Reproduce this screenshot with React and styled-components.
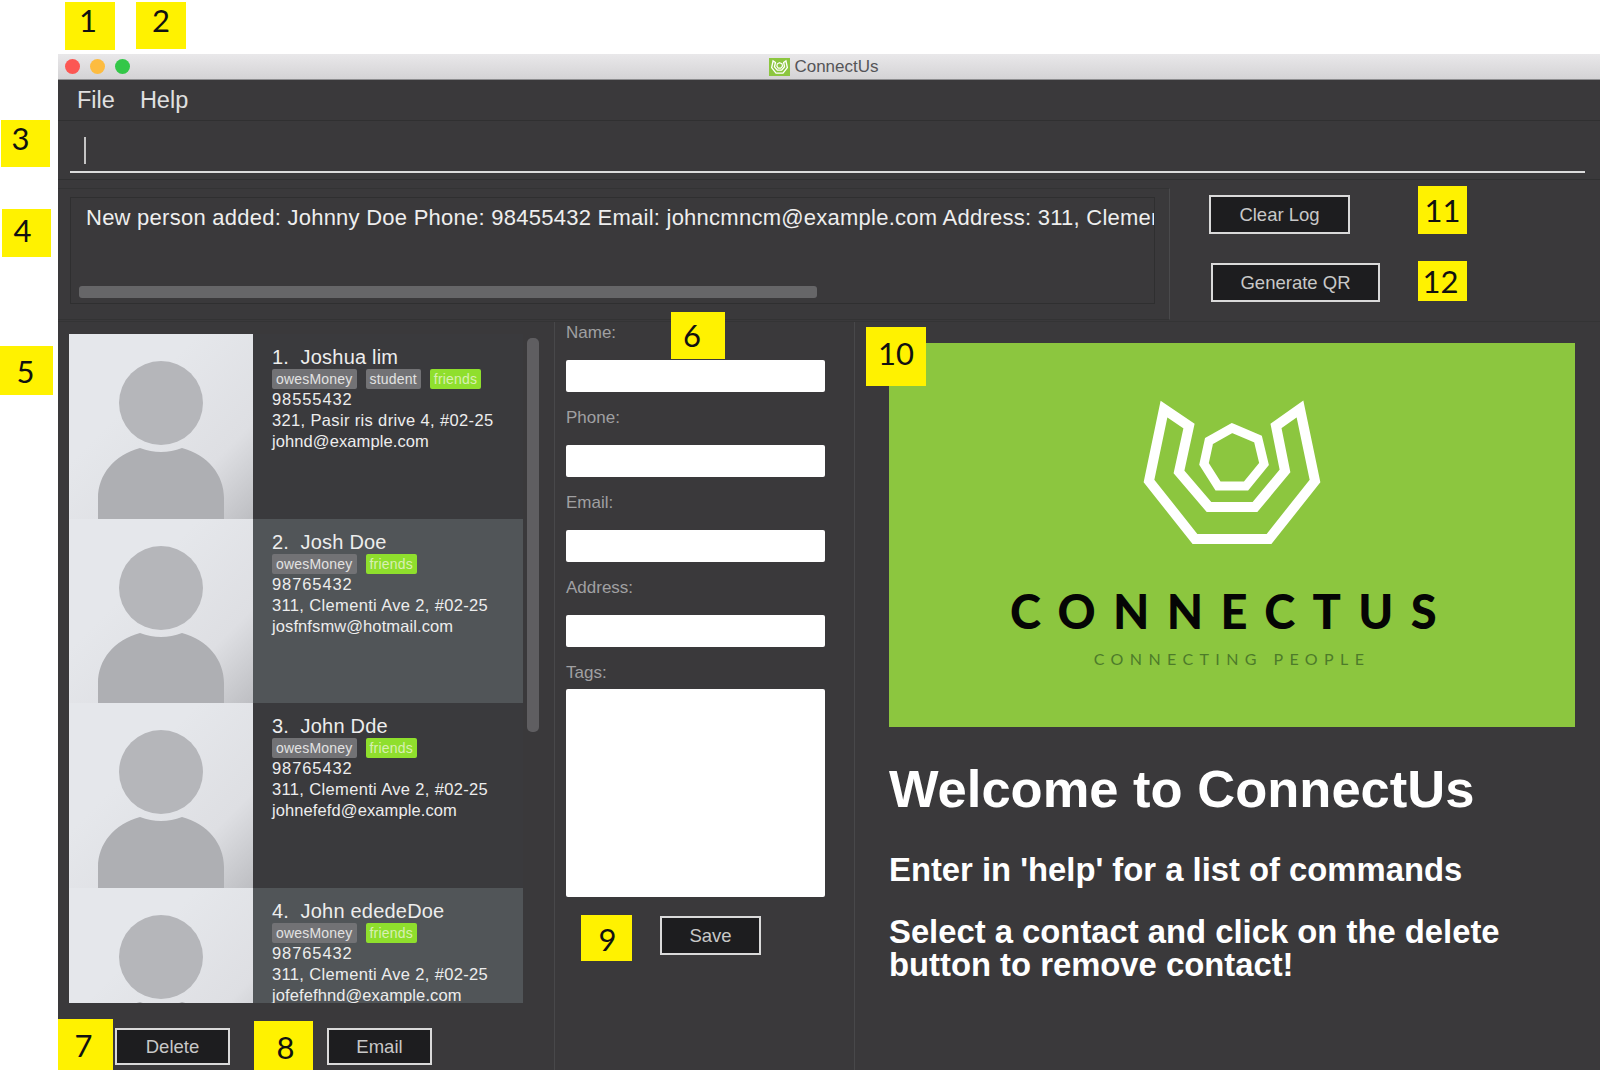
import React from 'react';
import styled, { createGlobalStyle } from 'styled-components';

const GlobalStyle = createGlobalStyle`
  html, body {
    margin: 0;
    background: #ffffff;
  }
  * {
    box-sizing: border-box;
  }
`;

const Page = styled.div`
  position: relative;
  width: 1600px;
  height: 1078px;
  padding: 54px 0 8px 58px;
  overflow: hidden;
  font-family: 'Liberation Sans', Arial, sans-serif;
`;

const Callout = styled.div`
  position: absolute;
  left: ${(p) => p.$x}px;
  top: ${(p) => p.$y}px;
  width: ${(p) => p.$w}px;
  height: ${(p) => p.$h}px;
  display: flex;
  align-items: center;
  justify-content: center;
  background: #fff200;
  color: #111111;
  font-family: Lato, sans-serif;
  font-size: 31px;
`;

const CalloutDigit = styled.span`
  transform: translate(${(p) => p.$dx}px, ${(p) => p.$dy}px);
`;

const Window = styled.div`
  display: flex;
  flex-direction: column;
  height: 100%;
  background: #3a393b;
`;

const TitleBar = styled.div`
  position: relative;
  display: flex;
  align-items: center;
  justify-content: center;
  height: 26px;
  padding-right: 10px;
  background: linear-gradient(#e9e8ea, #d4d3d5);
  border-bottom: 1px solid #8e8e90;
`;

const Lights = styled.div`
  position: absolute;
  left: 7px;
  top: 5px;
  display: flex;
  gap: 10px;
`;

const Light = styled.span`
  width: 15px;
  height: 15px;
  border-radius: 50%;
  background: ${(p) => p.$color};
`;

const TitleText = styled.span`
  margin-left: 4px;
  font-size: 17px;
  color: #555558;
`;

const MenuBar = styled.div`
  display: flex;
  align-items: center;
  gap: 25px;
  height: 41px;
  padding: 1px 0 0 19px;
  border-bottom: 1px solid #303031;
  color: #e0e0e0;
  font-size: 23.5px;
`;

const CommandBar = styled.div`
  height: 59px;
  padding: 16px 15px 0 12px;
  border-bottom: 1px solid #303031;
`;

const CommandField = styled.div`
  height: 36px;
  padding-left: 14px;
  border-bottom: 2px solid #dcdcdc;
`;

const Caret = styled.div`
  width: 2px;
  height: 27px;
  background: #c4c4c4;
`;

const LogRow = styled.div`
  display: flex;
  height: 142px;
  border-bottom: 1px solid #343435;
`;

const LogPane = styled.div`
  width: 1112px;
  height: 132px;
  margin-top: 8px;
  padding: 8px 14px 8px 12px;
  border-top: 1px solid #333334;
  border-right: 1px solid #4a4a4c;
  border-bottom: 1px solid #333334;
`;

const LogBox = styled.div`
  height: 107px;
  padding: 7px 0 0 15px;
  border: 1px solid #2f2f30;
  display: flex;
  flex-direction: column;
  overflow: hidden;
`;

const LogText = styled.div`
  flex: 1;
  overflow: hidden;
  white-space: nowrap;
  color: #eeeeee;
  font-size: 22px;
  letter-spacing: 0.25px;
`;

const LogScroll = styled.div`
  width: 738px;
  height: 12px;
  margin: 0 0 5px -7px;
  border-radius: 3px;
  background: #666668;
`;

const LogActions = styled.div`
  display: flex;
  flex-direction: column;
  align-items: flex-start;
  gap: 29px;
  padding: 15px 0 0 39px;
`;

const ActionButton = styled.button`
  width: ${(p) => p.$w}px;
  height: ${(p) => p.$h || 39}px;
  margin-left: ${(p) => p.$ml || 0}px;
  padding: 0;
  background: #1d1d1f;
  border: 2px solid #dadada;
  color: #c8c8c8;
  font-family: inherit;
  font-size: 18.5px;
`;

const MainRow = styled.div`
  flex: 1;
  display: flex;
  min-height: 0;
`;

const ListColumn = styled.div`
  display: flex;
  flex-direction: column;
  width: 496px;
  padding: 12px 0 0 11px;
`;

const ListArea = styled.div`
  display: flex;
  gap: 4px;
  height: 669px;
`;

const List = styled.div`
  width: 454px;
  overflow: hidden;
`;

const ListScroll = styled.div`
  width: 12px;
  height: 394px;
  margin-top: 4px;
  border-radius: 5px;
  background: #5f5e61;
`;

const Card = styled.div`
  display: flex;
  height: 184.67px;
  background: ${(p) => (p.$even ? '#515558' : '#3a3a3d')};
`;

const Photo = styled.svg`
  flex: none;
  display: block;
  width: 184px;
  height: 185px;
`;

const CardBody = styled.div`
  padding: 12px 0 0 19px;
  color: #ededed;
`;

const CardName = styled.div`
  height: 23px;
  font-size: 20px;
  line-height: 22px;
  letter-spacing: 0.2px;
`;

const Tags = styled.div`
  display: flex;
  gap: 9px;
  height: 20px;
`;

const Tag = styled.span`
  padding: 0 4px;
  border-radius: 2px;
  background: ${(p) => (p.$green ? '#8fdf2d' : '#727275')};
  color: ${(p) => (p.$green ? '#d9f0b4' : '#e2e2e2')};
  font-size: 14px;
  line-height: 20px;
  letter-spacing: 0.2px;
`;

const Detail = styled.div`
  height: 21px;
  font-size: 16.5px;
  line-height: 21px;
  letter-spacing: ${(p) => p.$spacing ?? 0.35}px;
`;

const ListActions = styled.div`
  display: flex;
  gap: 97px;
  padding: 25px 0 0 46px;
`;

const FormColumn = styled.div`
  width: 301px;
  padding: 0 0 0 11px;
  border-left: 1px solid #48484a;
  border-right: 1px solid #48484a;
`;

const FieldLabel = styled.div`
  height: ${(p) => p.$h || 38}px;
  padding-top: 1px;
  color: #a0a0a2;
  font-size: 17px;
  line-height: 20px;
`;

const Field = styled.div`
  width: 259px;
  height: ${(p) => p.$h || 32}px;
  margin-bottom: ${(p) => p.$mb ?? 15}px;
  border-radius: 2px;
  background: #ffffff;
`;

const SaveRow = styled.div`
  padding: 19px 0 0 94px;
`;

const WelcomeColumn = styled.div`
  flex: 1;
  padding: 21px 23px 0 34px;
  color: #ffffff;
`;

const LogoPanel = styled.div`
  display: flex;
  flex-direction: column;
  align-items: center;
  width: 686px;
  height: 384px;
  padding-top: 49px;
  background: #8cc63f;
`;

const LogoMark = styled.svg`
  display: block;
  width: 184px;
  height: 152px;
`;

const LogoWord = styled.div`
  margin-top: 42px;
  color: #050505;
  font-family: Lato, sans-serif;
  font-size: 47px;
  font-weight: 900;
  line-height: 50px;
  letter-spacing: 17.4px;
`;

const LogoTag = styled.div`
  margin-top: 13px;
  color: #4d7b2a;
  font-family: Lato, sans-serif;
  font-size: 16px;
  line-height: 20px;
  letter-spacing: 6.4px;
`;

const WelcomeTitle = styled.h1`
  margin: 32px 0 0;
  font-size: 52.5px;
  line-height: 60px;
`;

const WelcomeText = styled.h2`
  margin: ${(p) => p.$mt}px 0 0;
  font-size: 32.8px;
  line-height: 33px;
`;

const people = [
  { name: '1.  Joshua lim', tags: ['owesMoney', 'student', 'friends'], phone: '98555432', address: '321, Pasir ris drive 4, #02-25', email: 'johnd@example.com' },
  { name: '2.  Josh Doe', tags: ['owesMoney', 'friends'], phone: '98765432', address: '311, Clementi Ave 2, #02-25', email: 'josfnfsmw@hotmail.com' },
  { name: '3.  John Dde', tags: ['owesMoney', 'friends'], phone: '98765432', address: '311, Clementi Ave 2, #02-25', email: 'johnefefd@example.com' },
  { name: '4.  John ededeDoe', tags: ['owesMoney', 'friends'], phone: '98765432', address: '311, Clementi Ave 2, #02-25', email: 'jofefefhnd@example.com' },
];

const callouts = [
  { n: 1, x: 65, y: 2, w: 50, h: 48, dx: -2, dy: -6 },
  { n: 2, x: 136, y: 2, w: 50, h: 47, dx: 0, dy: -6 },
  { n: 3, x: 1, y: 120, w: 49, h: 47, dx: -5, dy: -6 },
  { n: 4, x: 2, y: 209, w: 49, h: 48, dx: -4, dy: -3 },
  { n: 5, x: 0, y: 346, w: 53, h: 49, dx: -1, dy: 0 },
  { n: 6, x: 671, y: 312, w: 54, h: 47, dx: -6, dy: -1 },
  { n: 7, x: 58, y: 1019, w: 55, h: 51, dx: -2, dy: 0 },
  { n: 8, x: 254, y: 1021, w: 59, h: 49, dx: 2, dy: 1 },
  { n: 9, x: 581, y: 915, w: 51, h: 46, dx: 1, dy: 1 },
  { n: 10, x: 866, y: 327, w: 60, h: 59, dx: 0, dy: -4 },
  { n: 11, x: 1418, y: 186, w: 49, h: 48, dx: 0, dy: 0 },
  { n: 12, x: 1418, y: 261, w: 49, h: 40, dx: -2, dy: 0 },
];

const Avatar = ({ id }) => (
  <Photo viewBox="0 0 184 185">
    <defs>
      <linearGradient id={id} x1="0.35" y1="0.35" x2="1" y2="1">
        <stop offset="0" stopColor="#e5e7eb" />
        <stop offset="0.6" stopColor="#dedfe3" />
        <stop offset="1" stopColor="#bdbec2" />
      </linearGradient>
    </defs>
    <rect width="184" height="185" fill={`url(#${id})`} />
    <circle cx="92" cy="69" r="42" fill="#b5b6ba" />
    <path
      d="M29 185 V164 C29 141 45 121 71 114 Q92 122 113 114 C139 121 155 141 155 164 V185 Z"
      fill="#aeafb3"
    />
  </Photo>
);

const ConnectLogo = ({ width = 10, inner = 9 }) => (
  <>
    <polygon
      points="15,8 0,80 46,138 120,138 166,80 151,8 127,25 136,70 106,106 60,106 30,71 40,25"
      fill="none"
      stroke="#ffffff"
      strokeWidth={width}
    />
    <polygon
      points="83,27 109,38 115,63 97,85 69,85 55,63 60,40"
      fill="none"
      stroke="#ffffff"
      strokeWidth={inner}
    />
  </>
);

const App = () => {
  return (
    <Page>
      <GlobalStyle />
      <Window>
        <TitleBar>
          <Lights>
            <Light $color="#fc5753" />
            <Light $color="#fdbc40" />
            <Light $color="#33c748" />
          </Lights>
          <svg width="21" height="20" viewBox="-28 -22 222 190">
            <rect x="-28" y="-22" width="222" height="190" fill="#8cc63f" />
            <ConnectLogo width={14} inner={12} />
          </svg>
          <TitleText>ConnectUs</TitleText>
        </TitleBar>
        <MenuBar>
          <span>File</span>
          <span>Help</span>
        </MenuBar>
        <CommandBar>
          <CommandField>
            <Caret />
          </CommandField>
        </CommandBar>
        <LogRow>
          <LogPane>
            <LogBox>
              <LogText>
                New person added: Johnny Doe Phone: 98455432 Email: johncmncm@example.com Address: 311, Clementi Ave 2, #02-25 Tags: friends
              </LogText>
              <LogScroll />
            </LogBox>
          </LogPane>
          <LogActions>
            <ActionButton $w={141}>Clear Log</ActionButton>
            <ActionButton $w={169} $ml={2}>Generate QR</ActionButton>
          </LogActions>
        </LogRow>
        <MainRow>
          <ListColumn>
            <ListArea>
              <List>
                {people.map((person, i) => (
                  <Card key={person.name} $even={i % 2 === 1}>
                    <Avatar id={`photo-${i}`} />
                    <CardBody>
                      <CardName>{person.name.replace('  ', '\u00a0\u00a0')}</CardName>
                      <Tags>
                        {person.tags.map((tag) => (
                          <Tag key={tag} $green={tag === 'friends'}>{tag}</Tag>
                        ))}
                      </Tags>
                      <Detail $spacing={0.9}>{person.phone}</Detail>
                      <Detail>{person.address}</Detail>
                      <Detail $spacing={0.1}>{person.email}</Detail>
                    </CardBody>
                  </Card>
                ))}
              </List>
              <ListScroll />
            </ListArea>
            <ListActions>
              <ActionButton $w={115} $h={37}>Delete</ActionButton>
              <ActionButton $w={105} $h={37}>Email</ActionButton>
            </ListActions>
          </ListColumn>
          <FormColumn>
            <FieldLabel>Name:</FieldLabel>
            <Field />
            <FieldLabel>Phone:</FieldLabel>
            <Field />
            <FieldLabel>Email:</FieldLabel>
            <Field />
            <FieldLabel>Address:</FieldLabel>
            <Field />
            <FieldLabel $h={27}>Tags:</FieldLabel>
            <Field $h={208} $mb={0} />
            <SaveRow>
              <ActionButton $w={101}>Save</ActionButton>
            </SaveRow>
          </FormColumn>
          <WelcomeColumn>
            <LogoPanel>
              <LogoMark viewBox="-9 -9 184 152">
                <ConnectLogo />
              </LogoMark>
              <LogoWord>CONNECTUS</LogoWord>
              <LogoTag>CONNECTING PEOPLE</LogoTag>
            </LogoPanel>
            <WelcomeTitle>Welcome to ConnectUs</WelcomeTitle>
            <WelcomeText $mt={34}>Enter in 'help' for a list of commands</WelcomeText>
            <WelcomeText $mt={29}>Select a contact and click on the delete<br />button to remove contact!</WelcomeText>
          </WelcomeColumn>
        </MainRow>
      </Window>
      {callouts.map((c) => (
        <Callout key={c.n} $x={c.x} $y={c.y} $w={c.w} $h={c.h}>
          <CalloutDigit $dx={c.dx} $dy={c.dy}>{c.n}</CalloutDigit>
        </Callout>
      ))}
    </Page>
  );
};

export default App;
